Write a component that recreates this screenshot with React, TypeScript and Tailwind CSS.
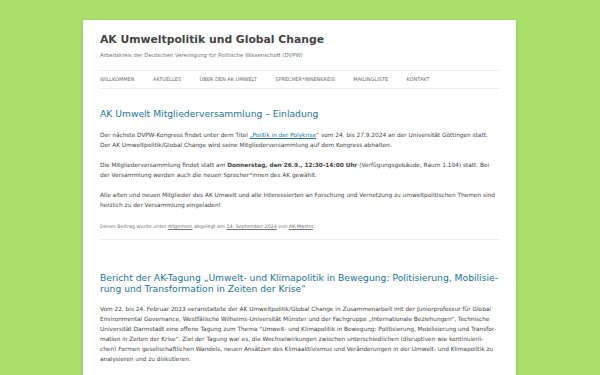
export default function App() {
  const nav = ['Willkommen', 'Aktuelles', 'Über den AK Umwelt', 'Sprecher*innenkreis', 'Mailingliste', 'Kontakt']
  return (
    <div className="h-screen overflow-hidden bg-[#aadf6a] pt-[20px] font-['DejaVu_Sans',sans-serif] text-[#444]">
      <div className="ml-[83px] w-[433px] min-h-[400px] bg-white px-[17px] shadow-[0_1px_3px_rgba(100,100,100,0.3)]">
        <header className="pt-[13px]">
          <h1 className="text-[10.8px] font-bold leading-[14px] text-[#444]">AK Umweltpolitik und Global Change</h1>
          <p className="mt-[4px] text-[5.4px] leading-[8px] text-[#757575]">
            Arbeitskreis der Deutschen Vereinigung für Politische Wissenschaft (DVPW)
          </p>
          <nav className="mt-[11px] flex h-[19px] items-center gap-[18.5px] border-y border-[#ededed] text-[5px] uppercase text-[#6a6a6a]">
            {nav.map((n) => (
              <span key={n}>{n}</span>
            ))}
          </nav>
        </header>

        <article className="border-b border-[#ededed] pb-[8px]">
          <h2 className="mt-[19px] text-[9.2px] leading-[12px] text-[#21759b]">AK Umwelt Mitgliederversammlung – Einladung</h2>
          <div className="mt-[10px] space-y-[10px] text-[5.8px] leading-[10px]">
            <p>
              Der nächste DVPW-Kongress findet unter dem Titel{' '}
              <a className="text-[#21759b] underline">„Politik in der Polykrise</a>“ vom 24. bis 27.9.2024 an der Universität
              Göttingen statt. Der AK Umweltpolitik/Global Change wird seine Mitgliederversammlung auf dem Kongress abhalten.
            </p>
            <p>
              Die Mitgliederversammlung findet statt am <b>Donnerstag, den 26.9., 12:30-14:00 Uhr</b> (Verfügungsgebäude, Raum
              1.104) statt. Bei der Versammlung werden auch die neuen Sprecher*innen des AK gewählt.
            </p>
            <p>
              Alle alten und neuen Mitglieder des AK Umwelt und alle Interessierten an Forschung und Vernetzung zu
              umweltpolitischen Themen sind herzlich zu der Versammlung eingeladen!
            </p>
          </div>
          <footer className="mt-[11px] text-[4.9px] leading-[10px] text-[#757575]">
            Dieser Beitrag wurde unter <a className="underline">Allgemein</a> abgelegt am{' '}
            <a className="underline">14. September 2024</a> von <a className="underline">AK-Master</a>.
          </footer>
        </article>

        <article>
          <h2 className="mt-[32px] text-[9.2px] leading-[11px] text-[#21759b]">
            Bericht der AK-Tagung „Umwelt- und Klimapolitik in Bewegung: Politisierung, Mobilisie­rung und Transformation in
            Zeiten der Krise“
          </h2>
          <p className="mt-[10px] text-[5.8px] leading-[10px]">
            Vom 22. bis 24. Februar 2023 veranstaltete der AK Umweltpolitik/Global Change in Zusammenarbeit mit der
            Juniorprofessur für Global Environmental Governance, Westfälische Wilhelms-Universität Münster und der Fachgruppe
            „Internationale Beziehungen“, Technische Universität Darmstadt eine offene Tagung zum Thema “Umwelt- und
            Klimapolitik in Bewegung: Politisierung, Mobilisierung und Transfor­mation in Zeiten der Krise“. Ziel der Tagung
            war es, die Wechselwirkungen zwischen unterschiedlichen (disruptiven wie kontinuierli-
            <br />
            chen) Formen gesellschaftlichen Wandels, neuen Ansätzen des Klimaaktivismus und Veränderungen in der Umwelt- und
            Klimapolitik zu analysieren und zu diskutieren.
          </p>
        </article>
      </div>
    </div>
  )
}
